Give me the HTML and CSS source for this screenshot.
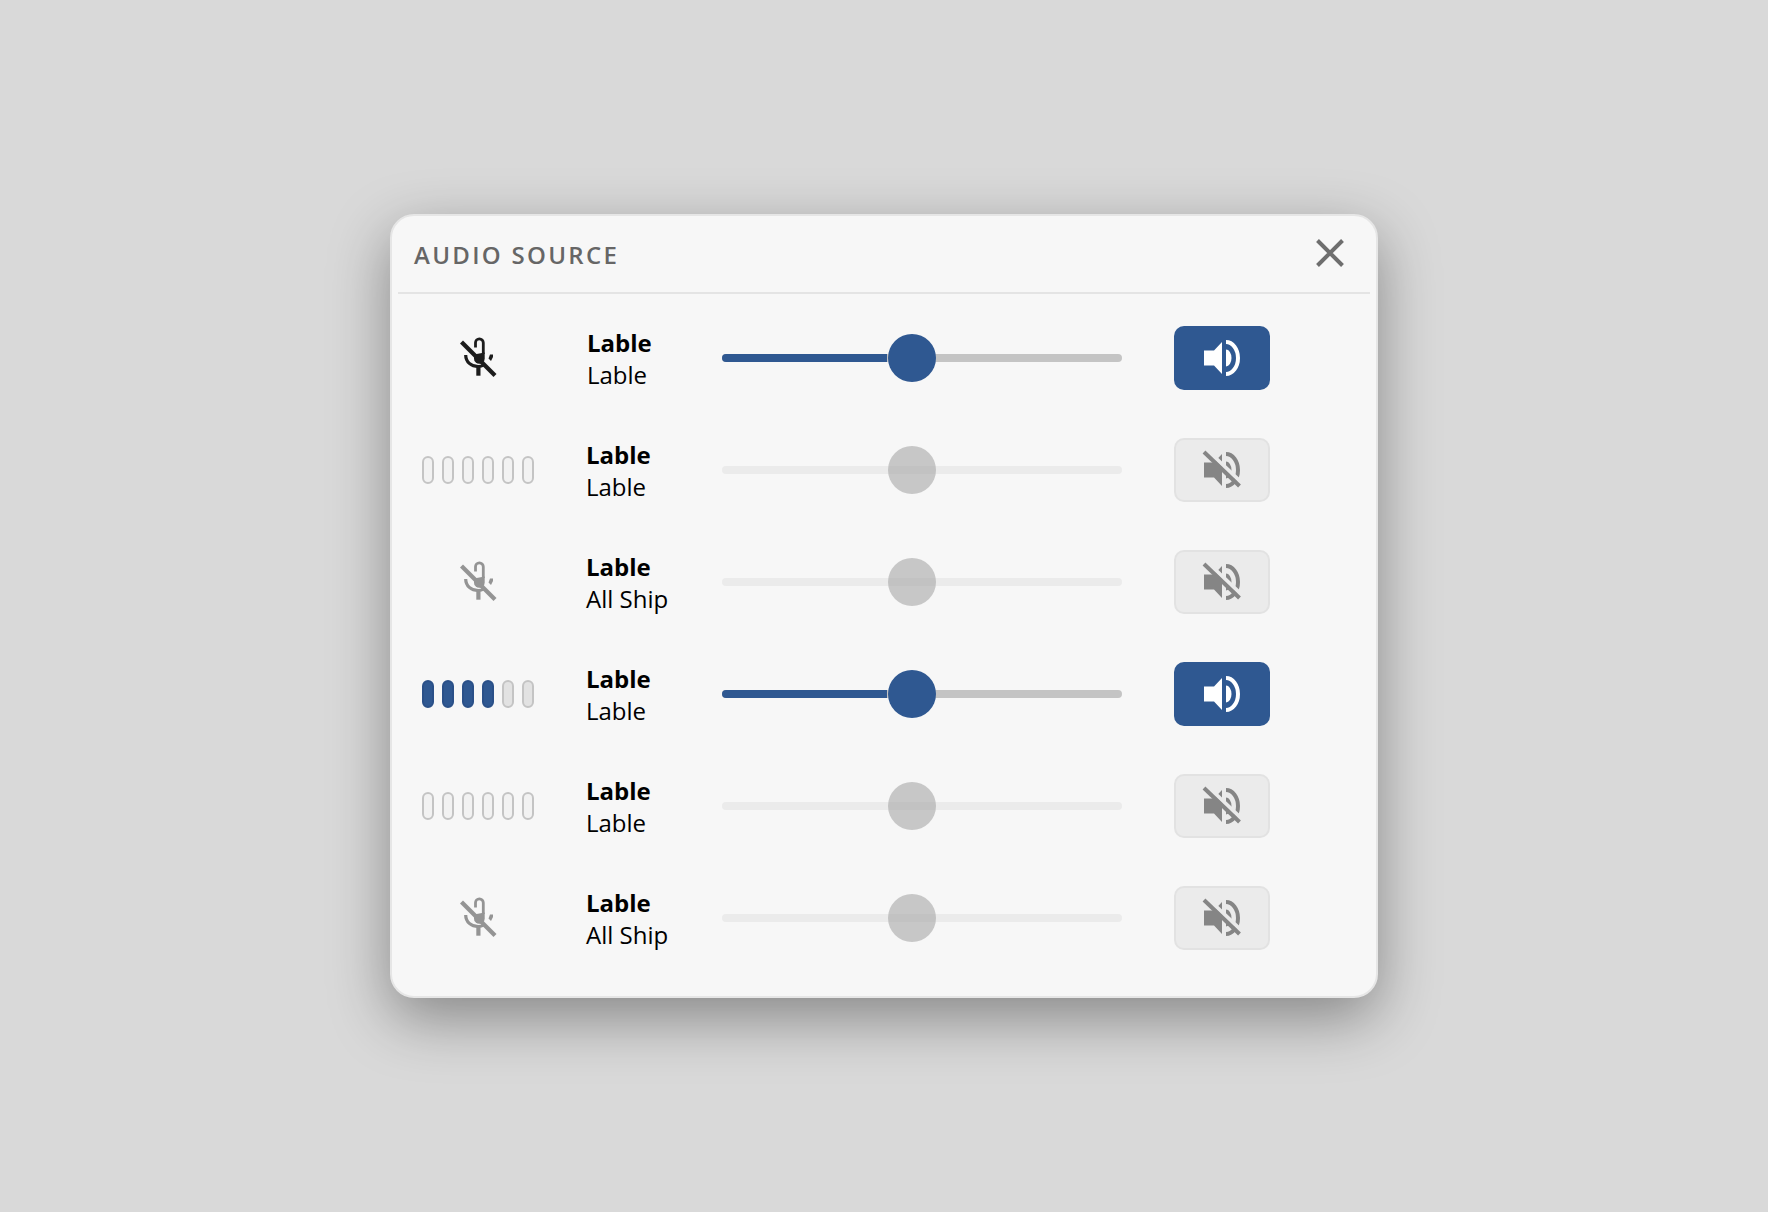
FILE: index.html
```html
<!DOCTYPE html>
<html lang="en">
<head>
<meta charset="utf-8">
<title>Audio Source</title>
<link rel="stylesheet" href="styles.css">
</head>
<body>
<svg class="defs" width="0" height="0" aria-hidden="true">
  <defs>
    <symbol id="mic-off" viewBox="0 0 46 48">
      <path d="M20.500 13.500V8.800a3.900 3.900 0 0 1 7.800 0V20" fill="none" stroke="currentColor" stroke-width="2.800"/>
      <path d="M19 20.500L29.700 18.500v6a5.300 5.300 0 0 1-10.700 0z" fill="currentColor"/>
      <path d="M10.700 21c0 7 5.500 11.500 12.500 11.500c2 0 4-.5 5.500-1.500" fill="none" stroke="currentColor" stroke-width="3.200"/>
      <path d="M35 20.500h3v2.500l-2 4-2.500-2.500z" fill="currentColor"/>
      <rect x="21.300" y="32" width="4.200" height="9.700" fill="currentColor"/>
      <path d="M6.500 8l33.500 33.500" stroke="currentColor" stroke-width="4.200" fill="none"/>
    </symbol>
    <symbol id="speaker-on" viewBox="-1 0 50 50">
      <path d="M6 17.500h10l8-8.500v32l-8-8.500H6z" fill="currentColor"/>
      <path d="M28 16.500a5.500 8.500 0 0 1 0 17z" fill="currentColor"/>
      <path d="M28 9a12 16 0 0 1 0 32" fill="none" stroke="currentColor" stroke-width="4"/>
    </symbol>
    <symbol id="speaker-off" viewBox="-1 0 50 50">
      <path d="M6 17.500h10l8-8.500v32l-8-8.500H6z" fill="currentColor"/>
      <path d="M28 16.500a5.500 8.500 0 0 1 0 17z" fill="currentColor"/>
      <path d="M28 9a12 16 0 0 1 0 32" fill="none" stroke="currentColor" stroke-width="4"/>
      <path d="M8.400 4.500L44.900 39" stroke="var(--slash-gap)" stroke-width="4" fill="none"/>
      <path d="M6 7L41.500 41" stroke="currentColor" stroke-width="4" fill="none"/>
    </symbol>
  </defs>
</svg>

<section class="panel">
  <header class="panel-head">
    <h1 class="panel-title">AUDIO SOURCE</h1>
    <button class="close" aria-label="Close">
      <svg viewBox="0 0 28 28" width="28" height="28"><path d="M1.500 1.500l25 25M26.500 1.500l-25 25" stroke="currentColor" stroke-width="4" fill="none"/></svg>
    </button>
  </header>

  <div class="rows">
    <div class="row on">
      <div class="level"><svg class="mic mic-dark"><use href="#mic-off"/></svg></div>
      <div class="label label-shift"><strong>Lable</strong><span>Lable</span></div>
      <div class="slider"><div class="fill"></div><div class="thumb"></div></div>
      <button class="speaker" aria-label="Mute"><svg><use href="#speaker-on"/></svg></button>
    </div>

    <div class="row off">
      <div class="level"><div class="bars"><i></i><i></i><i></i><i></i><i></i><i></i></div></div>
      <div class="label"><strong>Lable</strong><span>Lable</span></div>
      <div class="slider"><div class="thumb"></div></div>
      <button class="speaker" aria-label="Unmute"><svg><use href="#speaker-off"/></svg></button>
    </div>

    <div class="row off">
      <div class="level"><svg class="mic"><use href="#mic-off"/></svg></div>
      <div class="label"><strong>Lable</strong><span>All Ship</span></div>
      <div class="slider"><div class="thumb"></div></div>
      <button class="speaker" aria-label="Unmute"><svg><use href="#speaker-off"/></svg></button>
    </div>

    <div class="row on">
      <div class="level"><div class="bars active"><i class="lit"></i><i class="lit"></i><i class="lit"></i><i class="lit"></i><i></i><i></i></div></div>
      <div class="label"><strong>Lable</strong><span>Lable</span></div>
      <div class="slider"><div class="fill"></div><div class="thumb"></div></div>
      <button class="speaker" aria-label="Mute"><svg><use href="#speaker-on"/></svg></button>
    </div>

    <div class="row off">
      <div class="level"><div class="bars"><i></i><i></i><i></i><i></i><i></i><i></i></div></div>
      <div class="label"><strong>Lable</strong><span>Lable</span></div>
      <div class="slider"><div class="thumb"></div></div>
      <button class="speaker" aria-label="Unmute"><svg><use href="#speaker-off"/></svg></button>
    </div>

    <div class="row off">
      <div class="level"><svg class="mic"><use href="#mic-off"/></svg></div>
      <div class="label"><strong>Lable</strong><span>All Ship</span></div>
      <div class="slider"><div class="thumb"></div></div>
      <button class="speaker" aria-label="Unmute"><svg><use href="#speaker-off"/></svg></button>
    </div>
  </div>
</section>
</body>
</html>
```
FILE: styles.css
```css
* { box-sizing: border-box; }
html, body { height: 100%; }
body {
  margin: 0;
  background: #d9d9d9;
  display: flex;
  justify-content: center;
  align-items: flex-start;
  padding: 214px 0 0;
  font-family: "Open Sans", "Liberation Sans", sans-serif;
  overflow: hidden;
}
.defs { position: absolute; }
.panel {
  width: 988px;
  height: 784px;
  background: #f7f7f7;
  border: 2px solid #e6e6e6;
  border-radius: 24px;
  padding: 0 6px;
  box-shadow: 0 20px 60px rgba(0, 0, 0, 0.38);
}
.panel-head {
  height: 78px;
  border-bottom: 2px solid #e4e4e4;
  display: flex;
  align-items: center;
  justify-content: space-between;
  padding: 0 26px 0 16px;
}
.panel-title {
  margin: 2px 0 0;
  font-size: 24px;
  font-weight: 600;
  letter-spacing: 2.3px;
  color: #666;
  line-height: 32px;
}
.close {
  padding: 0;
  margin-bottom: 2px;
  border: 0;
  background: none;
  color: #6e6e6e;
  display: flex;
}
.rows { padding-top: 8px; }
.row {
  height: 112px;
  display: grid;
  grid-template-columns: 164px 136px 400px 148px;
  align-items: center;
  padding-left: 24px;
}
.level { width: 112px; display: flex; justify-content: center; }
.mic { width: 46px; height: 48px; color: #949494; display: block; }
.mic-dark { color: #1c1c1c; }
.bars { display: flex; gap: 8px; }
.bars i {
  display: block;
  width: 12px;
  height: 28px;
  border-radius: 6px;
  border: 2px solid #c4c4c4;
  background: #f2f2f2;
}
.bars.active i { background: #e2e2e2; }
.bars.active i.lit { background: #2f5891; border-color: #2a5088; }
.label { display: flex; flex-direction: column; padding-top: 2px; font-size: 24px; line-height: 32px; color: #000; }
.label strong { font-weight: 700; }
.label span { font-weight: 400; }
.label-shift { padding-left: 1px; }
.slider {
  position: relative;
  height: 8px;
  border-radius: 4px;
  background: #c4c4c4;
}
.fill {
  height: 100%;
  width: 165px;
  border-radius: 4px 0 0 4px;
  background: #2f5891;
}
.thumb {
  position: absolute;
  left: 165.5px;
  top: -20px;
  width: 48px;
  height: 48px;
  border-radius: 50%;
  background: #2f5891;
}
.off .slider { background: #ebebeb; }
.off .thumb { background: rgba(160, 160, 160, 0.55); }
.speaker {
  margin-left: 52px;
  width: 96px;
  height: 64px;
  padding: 0;
  border-radius: 10px;
  display: flex;
  align-items: center;
  justify-content: center;
  border: 0;
}
.speaker svg { width: 50px; height: 50px; display: block; }
.on .speaker { background: #2f5891; color: #fff; }
.off .speaker { background: #ebebeb; border: 2px solid #e2e2e2; color: #858585; --slash-gap: #ebebeb; }
```
